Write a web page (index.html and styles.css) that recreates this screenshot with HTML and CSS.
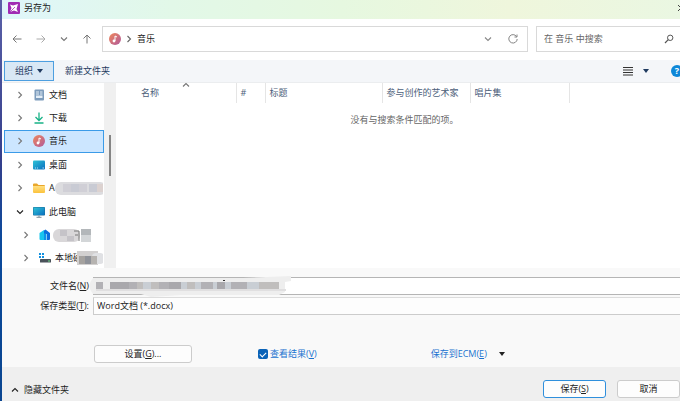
FILE: index.html
```html
<!DOCTYPE html>
<html lang="zh-CN">
<head>
    <meta charset="UTF-8">
    <meta name="viewport" content="width=device-width, initial-scale=1.0">
    <title>另存为</title>
    <link rel="stylesheet" href="styles.css">
</head>
<body>
    <svg width="0" height="0" class="defs" aria-hidden="true">
        <defs>
            <linearGradient id="music" x1="0" y1="0" x2="1" y2="1">
                <stop offset="0" stop-color="#f0875a"/>
                <stop offset="1" stop-color="#b05a9c"/>
            </linearGradient>
            <linearGradient id="screen" x1="0" y1="0" x2="1" y2="1">
                <stop offset="0" stop-color="#2fc3d6"/>
                <stop offset="1" stop-color="#0a6fc0"/>
            </linearGradient>
            <linearGradient id="folder" x1="0" y1="0" x2="0" y2="1">
                <stop offset="0" stop-color="#ffdf82"/>
                <stop offset="1" stop-color="#fbc23c"/>
            </linearGradient>
            <symbol id="i-music" viewBox="0 0 12 12">
                <circle cx="6" cy="6" r="6" fill="url(#music)"/>
                <circle cx="5" cy="8" r="1.4" fill="#fff"/>
                <path d="M6 8V3l2 1" fill="none" stroke="#fff" stroke-width="1"/>
            </symbol>
            <symbol id="i-right" viewBox="0 0 8 8">
                <path d="M2.5 1l3 3-3 3" fill="none" stroke="currentColor" stroke-width="1.1"/>
            </symbol>
            <symbol id="i-down" viewBox="0 0 8 8">
                <path d="M1 2.5l3 3 3-3" fill="none" stroke="currentColor" stroke-width="1.1"/>
            </symbol>
            <symbol id="i-up" viewBox="0 0 8 8">
                <path d="M1 5.5l3-3 3 3" fill="none" stroke="currentColor" stroke-width="1.1"/>
            </symbol>
            <symbol id="i-caret" viewBox="0 0 6 4">
                <path d="M0 0h6L3 4z" fill="currentColor"/>
            </symbol>
        </defs>
    </svg>

    <div class="dialog">
        <header class="titlebar">
            <svg class="icon-12" viewBox="0 0 12 12">
                <rect width="12" height="12" rx="1" fill="#a02cb4"/>
                <path d="M2 2.500l3 1L10 2 8.500 7l1.500 3-4-1.500L2 10l1.500-4z" fill="#fff"/>
                <path d="M2 10l5-5" stroke="#a02cb4" stroke-width=".8"/>
            </svg>
            <h1>另存为</h1>
            <button class="close" aria-label="关闭">
                <svg class="icon-8" viewBox="0 0 8 8"><path d="M1 1l6 6M7 1L1 7" stroke="#444" stroke-width="1"/></svg>
            </button>
        </header>

        <nav class="navbar">
            <div class="arrows">
                <button aria-label="后退"><svg class="icon-10" viewBox="0 0 10 10"><path d="M9.500 5H1M4.500 1.500L1 5l3.500 3.500" fill="none" stroke="#777"/></svg></button>
                <button aria-label="前进"><svg class="icon-10" viewBox="0 0 10 10"><path d="M.5 5H9M5.500 1.500L9 5 5.500 8.500" fill="none" stroke="#aaa"/></svg></button>
                <button aria-label="最近的位置"><svg class="icon-8"><use href="#i-down"/></svg></button>
                <button aria-label="上移"><svg class="icon-10" viewBox="0 0 10 10"><path d="M5 9.500V1M1.500 4.500L5 1l3.500 3.500" fill="none" stroke="#777"/></svg></button>
            </div>
            <div class="address">
                <svg class="icon-12"><use href="#i-music"/></svg>
                <svg class="icon-8"><use href="#i-right"/></svg>
                <a href="#">音乐</a>
                <button class="history" aria-label="历史记录"><svg class="icon-8"><use href="#i-down"/></svg></button>
                <button aria-label="刷新"><svg class="icon-10" viewBox="0 0 10 10"><path d="M8.500 2.500A4.200 4.200 0 1 0 9.200 5M9 .5v2.500H6.500" fill="none" stroke="#777" stroke-width=".9"/></svg></button>
            </div>
            <div class="search">
                <input type="text" placeholder="在 音乐 中搜索" aria-label="在 音乐 中搜索">
                <svg class="icon-10" viewBox="0 0 10 10"><circle cx="6.200" cy="3.800" r="2.700" fill="none" stroke="#555"/><path d="M4.300 5.700L1 9" stroke="#555" stroke-width="1.200"/></svg>
            </div>
        </nav>

        <div class="toolbar">
            <button class="organize">组织 <svg class="caret"><use href="#i-caret"/></svg></button>
            <button class="new-folder">新建文件夹</button>
            <button class="view" aria-label="视图">
                <svg class="icon-10" viewBox="0 0 10 10"><path d="M0 1.500h10M0 4h10M0 6.500h10M0 9h10" stroke="#333"/></svg>
                <svg class="caret"><use href="#i-caret"/></svg>
            </button>
            <button class="help" aria-label="帮助">?</button>
        </div>

        <main class="browser">
            <ul class="tree">
                <li>
                    <svg class="icon-8 arrow"><use href="#i-right"/></svg>
                    <svg class="icon-12" viewBox="0 0 12 12"><rect x="1.500" y=".5" width="9.500" height="11" rx="1" fill="#7d9cbc"/><path d="M3 3h3M7 3h2.500M3 5h3M7 5h2.500" stroke="#e4eef7" stroke-width="1"/><path d="M3 6.500h6.500v2.500H3z" fill="#e4eef7"/></svg>
                    <span>文档</span>
                </li>
                <li>
                    <svg class="icon-8 arrow"><use href="#i-right"/></svg>
                    <svg class="icon-12" viewBox="0 0 12 12"><path d="M6 .5v8M2.500 5L6 8.500 9.500 5M1.500 11h9" fill="none" stroke="#18b287" stroke-width="1.300"/></svg>
                    <span>下载</span>
                </li>
                <li class="selected">
                    <svg class="icon-8 arrow"><use href="#i-right"/></svg>
                    <svg class="icon-12"><use href="#i-music"/></svg>
                    <span>音乐</span>
                </li>
                <li>
                    <svg class="icon-8 arrow"><use href="#i-right"/></svg>
                    <svg class="icon-12" viewBox="0 0 12 12"><rect y="1.500" width="12" height="9" rx="1" fill="url(#screen)"/><path d="M2 9h1M4 9h1M9.500 9H11" stroke="#d6f4ff" stroke-width=".8"/></svg>
                    <span>桌面</span>
                </li>
                <li>
                    <svg class="icon-8 arrow"><use href="#i-right"/></svg>
                    <svg class="icon-12" viewBox="0 0 12 12"><path d="M0 2.500a1 1 0 0 1 1-1h3l1.500 1.500H11a1 1 0 0 1 1 1V6H0z" fill="#e9a72c"/><path d="M0 4h12v6a1 1 0 0 1-1 1H1a1 1 0 0 1-1-1z" fill="url(#folder)"/></svg>
                    <span>A</span>
                    <svg class="mask mask-wide" viewBox="0 0 52 14"><rect y="1" width="51" height="13" rx="6" fill="#dcdcdf"/><path d="M8 3h8v8H8zM24 3h8v8h-8z" fill="#d0cfd6"/><path d="M16 3h8v8h-8zM34 3h8v8h-8z" fill="#c9cbd4"/><path d="M42 3h7v8h-7z" fill="#dcd2d0"/></svg>
                </li>
                <li>
                    <svg class="icon-8 arrow open"><use href="#i-down"/></svg>
                    <svg class="icon-12" viewBox="0 0 12 12"><rect y="1" width="12" height="8.500" rx=".8" fill="#1b6f9c"/><rect x=".5" y="1.500" width="11" height="7.500" fill="url(#screen)"/><path d="M6 9.500v1.500M3.500 11.300h5" stroke="#7b8c98"/></svg>
                    <span>此电脑</span>
                </li>
                <li class="child">
                    <svg class="icon-8 arrow"><use href="#i-right"/></svg>
                    <svg class="icon-12" viewBox="0 0 12 12"><path d="M.5 4L5 1v10H1.500a1 1 0 0 1-1-1z" fill="#19c5ee"/><path d="M5 1.500L6.500.5 11 4v6a1 1 0 0 1-1 1H8V5H5z" fill="#0c6fdc"/><path d="M5 4.500h2.500V11H5z" fill="#0c93e8"/></svg>
                    <svg class="mask" viewBox="0 0 40 14"><rect y="1" width="27" height="13" rx="6" fill="#d9d7d9"/><path d="M7 2h7v6H7zM14 8h7v5h-7z" fill="#c5c3c8"/><path d="M21 3h5v10M22 7h3" fill="none" stroke="#777"/><path d="M28 1h10v6H28z" fill="#b3b7ba"/><path d="M28 7h10v7H28z" fill="#d3d6d8"/></svg>
                </li>
                <li class="child">
                    <svg class="icon-8 arrow"><use href="#i-right"/></svg>
                    <svg class="icon-12" viewBox="0 0 12 12"><path d="M0 1h2v2H0zM3 1h2v2H3zM0 4h2v2H0zM3 4h2v2H3z" fill="#1290e0"/><rect x="1" y="7" width="11" height="3.500" rx=".5" fill="#4a525a"/><path d="M9 9h2" stroke="#6fe08a"/></svg>
                    <span class="drive">本地磁</span>
                    <svg class="mask over" viewBox="0 0 40 14"><path d="M1 0h21v14H1z" fill="#d2d0d0"/><rect x="16" y="2" width="12" height="11" rx="4" fill="#e0e1e4"/><path d="M3 5h6v8H3z" fill="#a5a29f"/><path d="M9 5h6v8H9z" fill="#8f9299"/><path d="M15 5h6v8h-6z" fill="#b6b3b0"/></svg>
                </li>
            </ul>
            <div class="scrollbar"><div class="thumb"></div></div>
            <table class="files">
                <colgroup>
                    <col class="col-name"><col class="col-num"><col class="col-title"><col class="col-artist"><col class="col-album"><col>
                </colgroup>
                <thead>
                    <tr>
                        <th>名称<svg class="icon-8 sort"><use href="#i-up"/></svg></th>
                        <th>#</th>
                        <th>标题</th>
                        <th>参与创作的艺术家</th>
                        <th>唱片集</th>
                        <th class="rest"></th>
                    </tr>
                </thead>
                <tbody>
                    <tr><td colspan="6">没有与搜索条件匹配的项。</td></tr>
                </tbody>
            </table>
        </main>

        <section class="form">
            <div class="field">
                <label for="filename">文件名(<u>N</u>)</label>
                <div class="filename">
                    <input type="text" id="filename">
                    <svg class="redacted" viewBox="0 0 206 22">
                        <path d="M4 2h150l48-2v5l-6 1v10l-6 3H92l-30 2-10-3H4Q-3 10 4 2z" fill="#eeeeee"/>
                        <path d="M7 6h7v7H7zM40 6h8v7h-8zM70 6h10v7H70zM112 6h12v7h-12zM142 6h16v7h-16z" fill="#b2b1b5"/>
                        <path d="M21 6h10v7H21zM31 6h9v7h-9zM80 6h12v7H80zM128 6h8v7h-8z" fill="#a9a8ac"/>
                        <path d="M48 6h6v7h-6zM62 6h8v7h-8zM98 6h8v7h-8zM170 6h10v7h-10zM180 6h10v7h-10z" fill="#c0bebd"/>
                        <path d="M54 6h8v7h-8zM92 6h6v7h-6zM106 6h6v7h-6zM124 6h4v7h-4zM136 6h6v7h-6zM158 6h12v7h-12z" fill="#c9ced4"/>
                        <path d="M7 13h190v2H7z" fill="#e0dfe0"/>
                        <path d="M134 4h2v1h-2z" fill="#333"/>
                    </svg>
                </div>
            </div>
            <div class="field">
                <label for="filetype">保存类型(<u>T</u>):</label>
                <select id="filetype">
                    <option>Word文档 (*.docx)</option>
                </select>
            </div>
            <div class="options">
                <button class="btn settings">设置(<u>G</u>)...</button>
                <label class="check"><input type="checkbox" checked><span>查看结果(<u>V</u>)</span></label>
                <button class="ecm"><span>保存到ECM(<u>E</u>)</span><svg class="caret"><use href="#i-caret"/></svg></button>
            </div>
        </section>

        <footer class="footer">
            <button class="toggle"><svg class="icon-8"><use href="#i-up"/></svg>隐藏文件夹</button>
            <button class="btn primary">保存(<u>S</u>)</button>
            <button class="btn cancel">取消</button>
        </footer>
    </div>
</body>
</html>
```

FILE: styles.css
```css
* {
    margin: 0;
    padding: 0;
    box-sizing: border-box;
}

body {
    font-family: "Open Sans", "Noto Sans CJK SC", sans-serif;
    font-size: 9px;
    line-height: 14px;
    color: #222;
    background: linear-gradient(#5b61a8 0, #353f8c 40%, #0b4a9c 60%, #0a4590 100%);
    padding-left: 2px;
    min-height: 100vh;
    overflow: hidden;
}

.defs {
    position: absolute;
}

button,
input,
select {
    font: inherit;
    color: inherit;
    border: none;
    background: none;
    outline: none;
}

button {
    display: flex;
    align-items: center;
    white-space: nowrap;
}

svg {
    display: block;
    flex-shrink: 0;
}

.icon-8 {
    width: 8px;
    height: 8px;
}

.icon-10 {
    width: 10px;
    height: 10px;
}

.icon-12 {
    width: 12px;
    height: 12px;
}

.caret {
    width: 6px;
    height: 4px;
}

.dialog {
    display: flex;
    flex-direction: column;
    min-height: 100vh;
    background: #fff;
}

/* title bar */
.titlebar {
    display: flex;
    align-items: center;
    gap: 4px;
    height: 19px;
    padding: 0 0 4px 6px;
    background: linear-gradient(90deg, #dff6fa 0%, #e2f8e8 25%, #e6f8e0 50%, #eff6dc 75%, #eaf7e2 100%);
}

.titlebar h1 {
    font-size: 9px;
    font-weight: 400;
}

.close {
    margin-left: auto;
    margin-right: -5px;
}

/* navigation */
.navbar {
    display: flex;
    align-items: center;
    gap: 8px;
    height: 41px;
    padding: 0 0 2px 10px;
}

.arrows {
    display: flex;
    gap: 14px;
    width: 82px;
    color: #777;
}

.address {
    display: flex;
    align-items: center;
    flex: 1;
    gap: 4px;
    height: 26px;
    padding: 0 9px 0 6px;
    border: 1px solid #d9d9d9;
    color: #666;
}

.address a {
    color: #222;
    text-decoration: none;
}

.history {
    margin-left: auto;
    margin-right: 12px;
    color: #888;
}

.search {
    display: flex;
    align-items: center;
    width: 144px;
    height: 26px;
    padding: 0 6px 0 7px;
    border: 1px solid #d9d9d9;
    border-right: none;
}

.search input {
    flex: 1;
    min-width: 0;
}

.search input::placeholder {
    color: #666;
}

/* toolbar */
.toolbar {
    display: flex;
    align-items: center;
    height: 23px;
    padding-left: 2px;
    background: #f4f6f9;
    border-bottom: 1px solid #ebedef;
    color: #1f3a5f;
}

.organize {
    gap: 4px;
    height: 20px;
    padding: 0 10px;
    background: #d9e8f5;
    border: 1px solid #4d9fe0;
}

.new-folder {
    margin-left: 11px;
}

.view {
    gap: 10px;
    margin-left: auto;
}

.help {
    justify-content: center;
    flex-shrink: 0;
    width: 12px;
    height: 12px;
    margin-left: 22px;
    margin-right: -3px;
    border-radius: 50%;
    background: #0d87d8;
    color: #fff;
    font-weight: 700;
}

/* folder tree and file list */
.browser {
    display: flex;
    flex: 1;
    overflow: hidden;
}

.tree {
    display: flex;
    flex-direction: column;
    justify-content: space-between;
    flex-shrink: 0;
    width: 102px;
    margin-bottom: -2px;
    padding-left: 2px;
    list-style: none;
}

.tree li {
    display: flex;
    align-items: center;
    height: 23px;
    padding-left: 11px;
    border: 1px solid transparent;
    white-space: nowrap;
    overflow: hidden;
}

.tree .child {
    padding-left: 17px;
}

.tree .selected {
    background: #cce6ff;
    border-color: #3b9be8;
}

.arrow {
    color: #777;
    margin-right: 9px;
}

.open {
    color: #222;
}

.tree span {
    margin-left: 4px;
}

.mask {
    width: 40px;
    height: 14px;
    margin-left: 2px;
}

.mask-wide {
    width: 52px;
    margin-left: 0;
}

.over {
    margin-left: -6px;
}

.scrollbar {
    display: flex;
    justify-content: center;
    align-items: center;
    flex-shrink: 0;
    width: 12px;
    padding-bottom: 40px;
    background: #f0f0f0;
}

.thumb {
    width: 2px;
    height: 41px;
    background: #858585;
}

.files {
    flex: 1;
    width: 100%;
    height: 50px;
    margin-left: 1px;
    table-layout: fixed;
    border-collapse: collapse;
}

.col-name {
    width: 119px;
}

.col-num {
    width: 29px;
}

.col-title {
    width: 117px;
}

.col-artist {
    width: 88px;
}

.col-album {
    width: 99px;
}

.files th {
    position: relative;
    height: 20px;
    padding-left: 4px;
    border-right: 1px solid #e5e5e5;
    color: #4c607a;
    font-weight: 400;
    text-align: left;
    white-space: nowrap;
}

.files th:first-child {
    padding-left: 24px;
}

.files .rest {
    border-right: none;
}

.sort {
    position: absolute;
    top: -2px;
    left: 65px;
    color: #777;
}

.files td {
    height: 34px;
    padding-left: 12px;
    color: #666;
    text-align: center;
}

/* file name and type */
.form {
    display: flex;
    flex-direction: column;
    gap: 2px;
    padding: 9px 0 4px;
    background: #f9f9f9;
}

.field {
    display: flex;
    align-items: center;
}

.field label {
    width: 91px;
    padding-right: 4px;
    text-align: right;
    white-space: nowrap;
}

.filename {
    position: relative;
    display: flex;
    flex: 1;
}

.filename input,
.field select {
    flex: 1;
    height: 18px;
    padding-left: 3px;
    background: #fff;
    border: 1px solid #b5b5b5;
    border-right: none;
}

.field select {
    appearance: none;
    background: #fdfdfd;
    border-color: #dcdcdc #ccc #ccc;
}

.redacted {
    position: absolute;
    top: -1px;
    left: -4px;
    width: 206px;
    height: 22px;
}

.options {
    display: flex;
    align-items: center;
    margin-top: 28px;
    padding-left: 92px;
    color: #1a73d0;
}

.btn {
    justify-content: center;
    height: 18px;
    background: #fdfdfd;
    border: 1px solid #ccc;
    border-radius: 3px;
    color: #222;
}

.settings {
    width: 98px;
}

.check {
    display: flex;
    align-items: center;
    gap: 2px;
    margin-left: 66px;
}

.check input {
    appearance: none;
    width: 10px;
    height: 10px;
    border-radius: 2px;
    background: #0a63b8;
}

.check input:checked::before {
    content: "";
    display: block;
    width: 5px;
    height: 3px;
    margin: 3px auto 0;
    border-left: 1px solid #fff;
    border-bottom: 1px solid #fff;
    transform: rotate(-45deg);
}

.ecm {
    gap: 12px;
    margin-left: 114px;
}

.ecm .caret {
    color: #222;
}

/* footer */
.footer {
    display: flex;
    align-items: center;
    gap: 11px;
    height: 34px;
    padding: 9px 0 0 9px;
    background: #efefef;
}

.toggle {
    gap: 5px;
    margin-right: auto;
    padding-top: 2px;
}

.primary {
    width: 63px;
    border-color: #2f8fdc;
}

.cancel {
    width: 63px;
}
```
